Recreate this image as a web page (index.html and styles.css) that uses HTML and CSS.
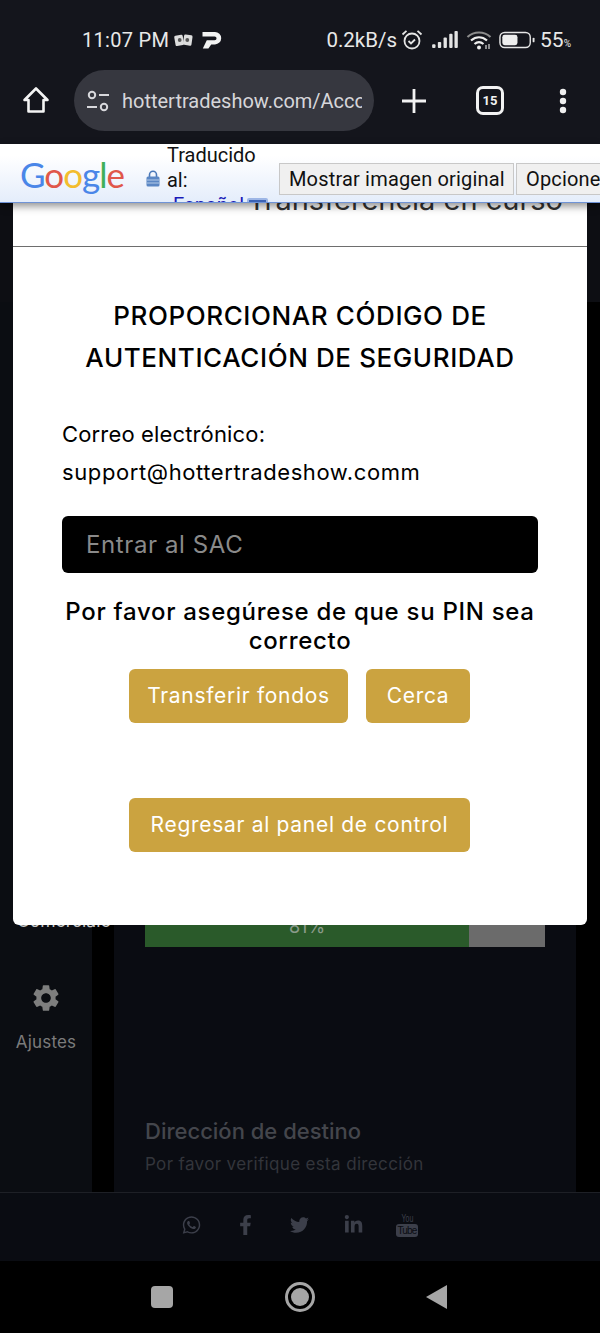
FILE: index.html
```html
<!DOCTYPE html>
<html lang="es">
<head>
<meta charset="utf-8">
<title>Transferencia en curso</title>
<link rel="stylesheet" href="styles.css">
</head>
<body>
<div class="phone">
  <header class="chrome">
    <div class="status">
      <div class="status-left">
        <span class="time">11:07 PM</span>
        <svg class="ic-cards" viewBox="0 0 20 14"><rect x="1" y="2" width="9" height="11" rx="1.5" fill="#ddd" transform="rotate(-10 5 8)"/><rect x="10" y="1.500" width="9" height="11" rx="1.500" fill="#ddd" transform="rotate(8 14 7)"/><circle cx="6" cy="7" r="2" fill="#555"/><circle cx="14" cy="7" r="2" fill="#555"/></svg>
        <svg class="ic-p" viewBox="0 0 20 18"><path d="M0.500 1H13a6 6 0 0 1 0 12.400H9.200L6.400 17.500H0.800L4.800 9.300H12.600a1.800 1.800 0 0 0 0-3.900H0.500Z" fill="#f2f2f2"/></svg>
      </div>
      <div class="status-right">
        <span class="speed">0.2kB/s</span>
        <svg class="ic-alarm" viewBox="0 0 24 24" fill="none" stroke="#e4e4e4" stroke-width="1.800"><circle cx="12" cy="13" r="7.500"/><path d="M8.500 13l2.500 2.500 4-4M2.500 6.500 6.500 2.800M21.500 6.500l-4-3.700"/></svg>
        <svg class="ic-signal" viewBox="0 0 28 20" fill="#e4e4e4"><rect x="1" y="15" width="3.500" height="4" rx="1"/><rect x="7" y="12.500" width="3.500" height="6.500" rx="1"/><rect x="13" y="8" width="3.500" height="11" rx="1"/><rect x="19" y="4" width="3.500" height="15" rx="1"/><rect x="24.500" y="1" width="3.500" height="18" rx="1"/></svg>
        <svg class="ic-wifi" viewBox="0 0 26 20" fill="none"><path d="M1.500 7C8 1 18 1 24.500 7" stroke="#8c8c8c" stroke-width="2.200"/><path d="M5 10.500c5-4.300 11-4.300 16 0M8.500 14c3-2.500 6-2.500 9 0" stroke="#eee" stroke-width="2.200"/><circle cx="13" cy="17.500" r="2" fill="#eee"/><path d="M20 15v4M23 14v5" stroke="#ccc" stroke-width="1.300"/></svg>
        <svg class="ic-batt" viewBox="0 0 38 18"><rect x="1" y="1" width="32" height="16" rx="5" fill="none" stroke="#e6e6e6" stroke-width="1.500"/><rect x="3.500" y="3.500" width="16" height="11" rx="2.500" fill="#eee"/><rect x="35.500" y="6.500" width="2" height="5" rx="1" fill="#e6e6e6"/></svg>
        <span class="batt-text">55<small>%</small></span>
      </div>
    </div>
    <div class="toolbar">
      <svg class="ic-home" viewBox="0 0 28 28" fill="none" stroke="#f4f4f4" stroke-width="2.600" stroke-linejoin="round"><path d="M14 2.500 2.500 14H6.500V25.500H21.500V14H25.500Z"/></svg>
      <div class="omnibox">
        <svg class="ic-tune" viewBox="0 0 24 22" fill="none" stroke="#d8d8dc" stroke-width="2"><circle cx="6" cy="5" r="3.200"/><path d="M13 5h10M1 17h10"/><circle cx="18" cy="17" r="3.200"/></svg>
        <span class="url">hottertradeshow.com/Account/transfer</span>
      </div>
      <svg class="ic-plus" viewBox="0 0 26 26" stroke="#f2f2f2" stroke-width="2.800"><path d="M13 1v24M1 13h24"/></svg>
      <span class="tabs">15</span>
      <svg class="ic-dots" viewBox="0 0 8 26" fill="#efefef"><circle cx="4" cy="4" r="3.200"/><circle cx="4" cy="13" r="3.200"/><circle cx="4" cy="22" r="3.200"/></svg>
    </div>
  </header>

  <div class="stage">
    <div class="page">
      <div class="page-head"></div>
      <div class="columns">
        <aside class="sidebar">
          <span class="side-cut">Comerciale</span>
          <svg class="ic-gear" viewBox="0 0 24 24" fill="#7e7e7e"><path d="M19.140 12.940c.04-.3.06-.61.06-.94 0-.32-.02-.64-.07-.94l2.030-1.580a.49.49 0 0 0 .12-.61l-1.920-3.320a.488.488 0 0 0-.59-.22l-2.390.96c-.5-.38-1.030-.7-1.620-.94l-.36-2.540a.484.484 0 0 0-.48-.41h-3.840c-.24 0-.43.17-.47.41l-.36 2.540c-.59.24-1.130.57-1.620.94l-2.390-.96c-.22-.08-.47 0-.59.22L2.740 8.870c-.12.21-.08.47.12.61l2.030 1.580c-.05.3-.09.63-.09.94s.02.64.07.94l-2.030 1.580a.49.49 0 0 0-.12.61l1.920 3.320c.12.22.37.29.59.22l2.390-.96c.5.38 1.030.7 1.620.94l.36 2.540c.05.24.24.41.48.41h3.840c.24 0 .44-.17.47-.41l.36-2.540c.59-.24 1.130-.56 1.620-.94l2.390.96c.22.08.47 0 .59-.22l1.920-3.320c.12-.22.07-.47-.12-.61l-2.010-1.580zM12 15.600c-1.980 0-3.600-1.620-3.600-3.600s1.620-3.600 3.600-3.600 3.600 1.620 3.600 3.600-1.620 3.600-3.600 3.600z"/></svg>
          <span class="side-label">Ajustes</span>
        </aside>
        <main class="content">
          <div class="progress"><div class="progress-fill" style="width:81%">81%</div></div>
          <h3 class="dest-title">Dirección de destino</h3>
          <p class="dest-note">Por favor verifique esta dirección</p>
        </main>
      </div>
      <footer class="social">
        <span class="social-item"><svg class="ic-soc" viewBox="0 0 448 512"><path d="M380.900 97.100C339 55.100 283.200 32 223.900 32c-122.400 0-222 99.600-222 222 0 39.100 10.200 77.300 29.600 111L0 480l117.700-30.900c32.400 17.700 68.900 27 106.100 27h.1c122.300 0 224.100-99.600 224.100-222 0-59.300-25.200-115-67.100-157zm-157 341.600c-33.200 0-65.700-8.900-94-25.700l-6.700-4-69.800 18.300L72 359.200l-4.400-7c-18.500-29.400-28.200-63.300-28.200-98.200 0-101.700 82.800-184.500 184.600-184.500 49.300 0 95.600 19.200 130.400 54.100 34.800 34.900 56.200 81.200 56.100 130.500 0 101.800-84.900 184.600-186.600 184.600zm101.200-138.200c-5.500-2.800-32.800-16.200-37.900-18-5.100-1.900-8.800-2.800-12.500 2.800-3.700 5.600-14.300 18-17.600 21.800-3.200 3.700-6.500 4.200-12 1.400-32.600-16.300-54-29.100-75.500-66-5.700-9.800 5.700-9.100 16.300-30.300 1.800-3.700.9-6.900-.5-9.700-1.400-2.800-12.500-30.100-17.100-41.200-4.500-10.800-9.100-9.300-12.500-9.500-3.200-.2-6.900-.2-10.600-.2-3.700 0-9.700 1.400-14.800 6.900-5.100 5.600-19.400 19-19.400 46.300 0 27.300 19.900 53.700 22.600 57.400 2.800 3.700 39.100 59.700 94.800 83.800 35.200 15.200 49 16.500 66.600 13.900 10.700-1.600 32.800-13.400 37.400-26.400 4.600-13 4.600-24.100 3.200-26.400-1.300-2.500-5-3.900-10.500-6.600z"/></svg></span>
        <span class="social-item"><svg class="ic-soc" viewBox="0 0 320 512"><path d="M279.140 288l14.220-92.660h-88.910v-60.130c0-25.350 12.420-50.060 52.240-50.060h40.420V6.260S260.430 0 225.360 0c-73.220 0-121.080 44.380-121.080 124.720v70.620H22.890V288h81.390v224h100.170V288z"/></svg></span>
        <span class="social-item"><svg class="ic-soc" viewBox="0 0 512 512"><path d="M459.370 151.716c.325 4.548.325 9.097.325 13.645 0 138.720-105.583 298.558-298.558 298.558-59.452 0-114.680-17.219-161.137-47.106 8.447.974 16.568 1.299 25.340 1.299 49.055 0 94.213-16.568 130.274-44.832-46.132-.975-84.792-31.188-98.112-72.772 6.498.974 12.995 1.624 19.818 1.624 9.421 0 18.843-1.300 27.614-3.573-48.081-9.747-84.143-51.980-84.143-102.985v-1.299c13.969 7.797 30.214 12.670 47.431 13.319-28.264-18.843-46.781-51.005-46.781-87.391 0-19.492 5.197-37.360 14.294-52.954 51.655 63.675 129.300 105.258 216.365 109.807-1.624-7.797-2.599-15.918-2.599-24.040 0-57.828 46.782-104.934 104.934-104.934 30.213 0 57.502 12.670 76.670 33.137 23.715-4.548 46.456-13.320 66.599-25.340-7.798 24.366-24.366 44.833-46.132 57.827 21.117-2.273 41.584-8.122 60.426-16.243-14.292 20.791-32.161 39.308-52.628 54.253z"/></svg></span>
        <span class="social-item"><svg class="ic-soc" viewBox="0 0 448 512"><path d="M100.280 448H7.400V148.900h92.880zM53.790 108.100C24.090 108.100 0 83.500 0 53.800a53.790 53.790 0 0 1 107.580 0c0 29.700-24.100 54.300-53.790 54.300zM447.900 448h-92.680V302.400c0-34.700-.7-79.200-48.290-79.200-48.290 0-55.690 37.700-55.690 76.700V448h-92.780V148.900h89.080v40.800h1.300c12.400-23.500 42.690-48.300 87.880-48.300 94 0 111.280 61.900 111.280 142.300V448z"/></svg></span>
        <span class="social-item"><span class="yt"><span class="yt-you">You</span><span class="yt-tube">Tube</span></span></span>
      </footer>
    </div>

    <div class="modal">
      <div class="modal-head"><span class="modal-head-title">Transferencia en curso</span></div>
      <div class="modal-body">
        <h2 class="modal-title">PROPORCIONAR CÓDIGO DE AUTENTICACIÓN DE SEGURIDAD</h2>
        <p class="mail-label">Correo electrónico:</p>
        <p class="mail-value">support@hottertradeshow.comm</p>
        <div class="pin-input">Entrar al SAC</div>
        <p class="pin-note">Por favor asegúrese de que su PIN sea correcto</p>
        <div class="btn-row">
          <span class="btn btn-transfer">Transferir fondos</span>
          <span class="btn btn-close">Cerca</span>
        </div>
        <div class="btn-row btn-row-back">
          <span class="btn btn-back">Regresar al panel de control</span>
        </div>
      </div>
    </div>

    <div class="translate-bar">
      <span class="g-logo"><span class="g-b">G</span><span class="g-r">o</span><span class="g-y">o</span><span class="g-b">g</span><span class="g-g">l</span><span class="g-r">e</span></span>
      <svg class="ic-lock" viewBox="0 0 14 17"><path d="M3.500 7V4.800a3.500 3.500 0 0 1 7 0V7" fill="none" stroke="#4a78b8" stroke-width="1.600"/><rect x="0.500" y="6.500" width="13" height="10" rx="1.500" fill="#5b87c4"/><path d="M1 10h12M1 13h12" stroke="#b5cbe8" stroke-width="1"/></svg>
      <div class="tr-info">
        <span class="tr-line">Traducido</span>
        <span class="tr-line">al:</span>
        <span class="tr-lang">Español<span class="tr-drop"></span></span>
      </div>
      <span class="tr-btn tr-btn-main">Mostrar imagen original</span>
      <span class="tr-btn tr-btn-opt">Opciones</span>
    </div>
  </div>

  <nav class="navbar">
    <span class="nav-square"></span>
    <span class="nav-circle"><span class="nav-dot"></span></span>
    <span class="nav-back"></span>
  </nav>
</div>
</body>
</html>
```
FILE: styles.css
```css
* { box-sizing: border-box; }
html, body { margin: 0; padding: 0; background: #000; }
body { font-family: Inter, "Noto Sans", sans-serif; }
h2, h3, p { margin: 0; font-weight: inherit; }
svg { display: block; flex: none; }

.phone { width: 600px; height: 1333px; display: flex; flex-direction: column; overflow: hidden; }

/* Browser chrome */
.chrome { height: 144px; flex: none; background: #14151c; font-family: Roboto, sans-serif; color: #e8e8e8; }
.status { height: 70px; padding: 9px 29px 0 82px; display: flex; justify-content: space-between; align-items: center; }
.status-left, .status-right { display: flex; align-items: center; }
.time { font-size: 20px; letter-spacing: .3px; }
.ic-cards { width: 19px; height: 14px; margin-left: 5px; }
.ic-p { width: 20px; height: 18px; margin-left: 9px; }
.speed { font-size: 20.500px; }
.ic-alarm { width: 24px; height: 24px; margin-left: 3px; }
.ic-signal { width: 27px; height: 19px; margin-left: 7px; }
.ic-wifi { width: 26px; height: 20px; margin-left: 8px; }
.ic-batt { width: 36px; height: 18px; margin-left: 7px; }
.batt-text { font-size: 21px; margin-left: 5px; }
.batt-text small { font-size: 10px; }

.toolbar { height: 74px; display: flex; align-items: flex-start; }
.ic-home { width: 28px; height: 28px; margin: 16px 0 0 22px; }
.omnibox { width: 300px; height: 61px; margin-left: 24px; padding: 0 12px; border-radius: 31px; background: #36373f; display: flex; align-items: center; overflow: hidden; }
.ic-tune { width: 24px; height: 22px; }
.url { margin-left: 12px; font-size: 20px; color: #d6d6da; white-space: nowrap; overflow: hidden; }
.ic-plus { width: 26px; height: 26px; margin: 18px 0 0 27px; }
.tabs { width: 28px; height: 29px; margin: 16px 0 0 49px; border: 3px solid #f2f2f2; border-radius: 7px; font-size: 13px; font-weight: 700; color: #f2f2f2; display: flex; align-items: center; justify-content: center; }
.ic-dots { width: 8px; height: 26px; margin: 18px 0 0 55px; }

/* Stage */
.stage { position: relative; height: 1117px; flex: none; }
.page { height: 100%; display: flex; flex-direction: column; background: #000; }
.page-head { height: 158px; flex: none; background: #0d0e13; }
.columns { height: 890px; flex: none; display: flex; }
.sidebar { width: 92px; flex: none; background: #0b0d12; padding-top: 609px; display: flex; flex-direction: column; align-items: center; }
.side-cut { align-self: flex-start; margin-left: 17px; font-size: 17.500px; line-height: 20px; color: #c8c8c8; white-space: nowrap; }
.ic-gear { width: 32px; height: 32px; margin-top: 51px; }
.side-label { margin-top: 17px; font-size: 17px; line-height: 22px; letter-spacing: .2px; color: #7b7b7b; }
.content { width: 462px; margin-left: 22px; background: #0a0c12; padding: 605px 31px 0; }
.progress { width: 400px; height: 40px; background: #6b6b6b; }
.progress-fill { height: 100%; background: #2a5a2a; color: #8a9a8a; font-size: 18px; line-height: 40px; text-align: center; }
.dest-title { margin-top: 170px; font-size: 22px; line-height: 28px; font-weight: 500; color: #44464c; white-space: nowrap; }
.dest-note { margin-top: 8px; font-size: 17px; line-height: 22px; letter-spacing: .35px; color: #33353b; white-space: nowrap; }
.social { height: 69px; flex: none; background: #0a0c12; border-top: 1px solid #1e2026; padding: 0 2px 4px 0; display: flex; justify-content: center; align-items: center; }
.social-item { width: 54px; display: flex; justify-content: center; }
.ic-soc { height: 20px; width: 19px; fill: #3c3f4a; }
.yt { display: flex; flex-direction: column; align-items: center; font-family: "Liberation Sans", sans-serif; color: #3c3f4a; }
.yt-you { font-size: 10px; line-height: 10px; transform: scaleX(.7); }
.yt-tube { font-size: 10px; line-height: 13px; background: #3c3f4a; color: #0a0c12; border-radius: 3px; padding: 0 1px; letter-spacing: -.8px; }

/* Modal */
.modal { position: absolute; left: 13px; top: 36px; width: 574px; height: 745px; background: #fff; border-radius: 6px; color: #000; }
.modal-head { height: 67px; border-bottom: 1px solid #6e6e6e; padding: 0 24px 0 0; text-align: right; }
.modal-head-title { display: block; font-size: 29px; line-height: 40px; color: #333; }
.modal-body { padding: 0 49px; }
.modal-title { margin: 48px -20px 0; font-size: 26px; line-height: 42px; font-weight: 500; text-align: center; letter-spacing: .6px; }
.mail-label { margin-top: 36px; font-size: 22px; line-height: 38px; letter-spacing: .15px; }
.mail-value { font-size: 22px; line-height: 38px; letter-spacing: .6px; }
.pin-input { margin-top: 25px; height: 57px; background: #000; border-radius: 6px; padding-left: 24px; font-size: 24px; line-height: 57px; letter-spacing: .6px; color: #8a8a8a; }
.pin-note { margin: 24px -10px 0; font-size: 24px; line-height: 29px; font-weight: 500; text-align: center; letter-spacing: .7px; }
.btn-row { margin-top: 14px; padding-right: 1px; display: flex; justify-content: center; gap: 18px; }
.btn-row-back { margin-top: 75px; }
.btn { height: 54px; background: #cba340; border-radius: 6px; font-size: 21px; line-height: 54px; letter-spacing: .7px; color: #fff; white-space: nowrap; text-align: center; }
.btn-transfer { width: 219px; }
.btn-close { width: 104px; }
.btn-back { width: 341px; }

/* Translate bar */
.translate-bar { position: absolute; left: 0; top: 0; width: 600px; height: 59px; overflow: hidden; display: flex; align-items: center; background: linear-gradient(#fff 20%, #e4edfb); border-bottom: 1px solid #6f93d6; box-shadow: 0 3px 8px rgba(0,0,0,.45); font-family: Roboto, sans-serif; color: #111; }
.g-logo { margin: 2px 0 0 20px; font-family: Lato, sans-serif; font-size: 35px; line-height: 40px; letter-spacing: -1px; flex: none; }
.g-b { color: #4a86e8; }
.g-r { color: #e0574a; }
.g-y { color: #f3bd2e; }
.g-g { color: #3faf5a; }
.ic-lock { width: 14px; height: 17px; margin: 10px 0 0 22px; }
.tr-info { align-self: flex-start; width: 112px; flex: none; margin: -1px 0 0 7px; display: flex; flex-direction: column; font-size: 20px; line-height: 25px; white-space: nowrap; }
.tr-lang { color: #1a1ab8; margin-left: 6px; display: flex; align-items: center; }
.tr-drop { width: 21px; height: 16px; margin-left: 3px; background: #3b63b5; border: 2px solid #9db6e6; border-radius: 2px; }
.tr-btn { align-self: flex-start; height: 32px; margin-top: 19px; padding: 0 9px; background: #f0f0f0; border: 1px solid #c8c8c8; font-size: 20px; line-height: 30px; letter-spacing: .18px; color: #111; white-space: nowrap; flex: none; }
.tr-btn-main { width: 235px; text-align: center; }
.tr-btn-opt { margin-left: 2px; }

/* Android nav */
.navbar { height: 72px; flex: none; background: #000; display: flex; align-items: center; }
.nav-square { width: 22px; height: 22px; margin-left: 151px; background: #a6a6a6; border-radius: 4px; }
.nav-circle { width: 30px; height: 30px; margin-left: 112px; border: 3px solid #a6a6a6; border-radius: 50%; display: flex; align-items: center; justify-content: center; }
.nav-dot { width: 18px; height: 18px; background: #a6a6a6; border-radius: 50%; }
.nav-back { width: 0; height: 0; margin-left: 111px; border-top: 12.500px solid transparent; border-bottom: 12.500px solid transparent; border-right: 21px solid #a6a6a6; }
```
